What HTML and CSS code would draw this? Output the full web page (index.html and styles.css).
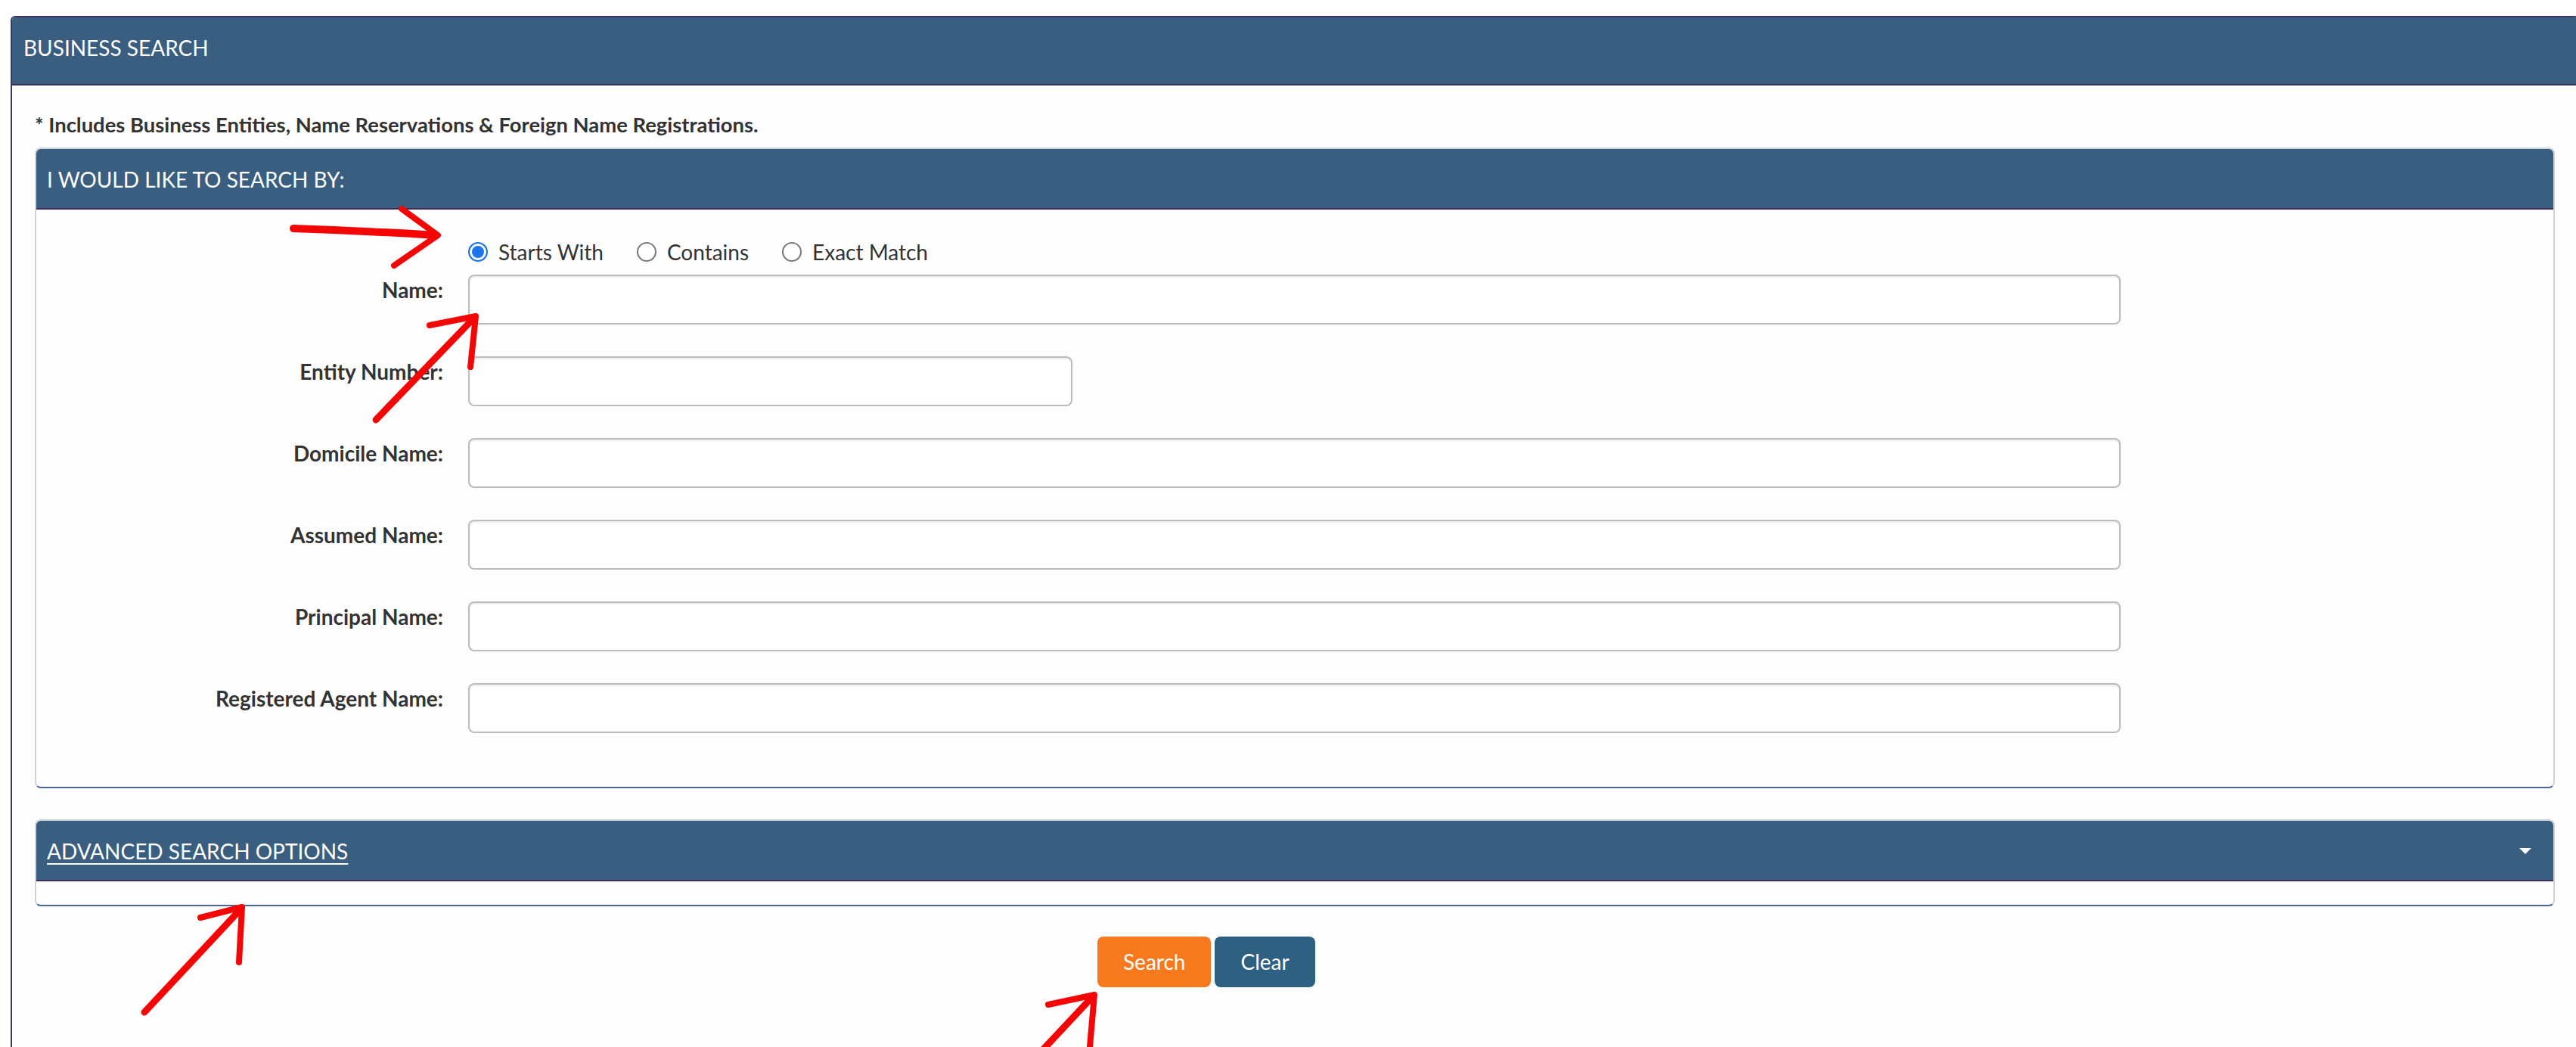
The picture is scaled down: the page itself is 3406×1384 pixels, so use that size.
FILE: index.html
```html
<!DOCTYPE html>
<html lang="en">
<head>
    <meta charset="UTF-8">
    <meta name="viewport" content="width=device-width, initial-scale=1.0">
    <title>Business Search</title>
    <link rel="stylesheet" href="styles.css">
</head>
<body>
<div class="page">
    <div class="panel panel-main">
        <div class="panel-heading">BUSINESS SEARCH</div>
        <div class="panel-body">
            <p class="note">* Includes Business Entities, Name Reservations &amp; Foreign Name Registrations.</p>

            <div class="panel panel-sub">
                <div class="panel-heading">I WOULD LIKE TO SEARCH BY:</div>
                <div class="panel-body search-by">
                    <div class="match-type">
                        <label class="radio"><input type="radio" name="match" checked> Starts With</label>
                        <label class="radio"><input type="radio" name="match"> Contains</label>
                        <label class="radio"><input type="radio" name="match"> Exact Match</label>
                    </div>
                    <div class="form-grid">
                        <label class="control-label" for="name">Name:</label>
                        <input class="form-control" id="name" type="text">

                        <label class="control-label" for="entity">Entity Number:</label>
                        <input class="form-control short" id="entity" type="text">

                        <label class="control-label" for="domicile">Domicile Name:</label>
                        <input class="form-control" id="domicile" type="text">

                        <label class="control-label" for="assumed">Assumed Name:</label>
                        <input class="form-control" id="assumed" type="text">

                        <label class="control-label" for="principal">Principal Name:</label>
                        <input class="form-control" id="principal" type="text">

                        <label class="control-label" for="agent">Registered Agent Name:</label>
                        <input class="form-control" id="agent" type="text">
                    </div>
                </div>
            </div>

            <div class="panel panel-sub panel-advanced">
                <div class="panel-heading">
                    <a href="#">ADVANCED SEARCH OPTIONS</a>
                    <span class="caret"></span>
                </div>
                <div class="panel-body"></div>
            </div>

            <div class="actions">
                <button class="btn btn-search" type="button">Search</button>
                <button class="btn btn-clear" type="button">Clear</button>
            </div>
        </div>
    </div>

    <!-- hand drawn pointers -->
    <svg class="marks" width="3406" height="1384" viewBox="0 0 3406 1384">
        <g fill="none" stroke="#f40606" stroke-linecap="round" stroke-linejoin="round">
            <path d="M388 302 Q480 305 576 311" stroke-width="10"/>
            <path d="M531 276 L579 311 L521 351" stroke-width="8"/>

            <path d="M497 555 L627 420" stroke-width="9"/>
            <path d="M568 430 L629 418 L622 485" stroke-width="8"/>

            <path d="M191 1338 L318 1202" stroke-width="9"/>
            <path d="M265 1213 L320 1199 L316 1272" stroke-width="8"/>

            <path d="M1372 1395 L1445 1317" stroke-width="9"/>
            <path d="M1386 1328 L1447 1315 L1440 1395" stroke-width="8"/>
        </g>
    </svg>
</div>
</body>
</html>
```

FILE: styles.css
```css
html, body {
    margin: 0;
    overflow: hidden;
    background: #fff;
}
body {
    font-family: Lato, "Open Sans", Arial, sans-serif;
    color: #333;
}
.page {
    position: relative;
    padding: 21px 0 0 14px;
}

/* panels */
.panel {
    background: #fdfdfd;
}
.panel-heading {
    background: #3a5e80;
    color: #fff;
    font-size: 28px;
    line-height: 40px;
    border-bottom: 2px solid #3c2c5e;
}
.panel-main {
    margin-right: -4px;
    border: 2px solid #3d3466;
    border-radius: 6px 6px 0 0;
    overflow: hidden;
}
.panel-main > .panel-heading {
    padding: 20px 15px 28px;
}
.panel-main > .panel-body {
    padding: 34px 30px 140px;
}
.note {
    margin: 0 0 12px;
    font-size: 27.4px;
    line-height: 36px;
    font-weight: 700;
}
.panel-sub {
    border: 2px solid #ccd4de;
    border-bottom-color: #4b6899;
    border-radius: 8px;
    overflow: hidden;
}
.panel-sub > .panel-heading {
    padding: 20px 14px 18px;
}

/* search by */
.search-by {
    padding: 38px 0 71px;
}
.match-type {
    display: flex;
    margin: 0 0 12px 571px;
    font-size: 28px;
    line-height: 36px;
}
.radio {
    display: flex;
    align-items: center;
    gap: 14px;
    margin-right: 44px;
}
.radio input {
    appearance: none;
    -webkit-appearance: none;
    margin: 0;
    width: 26px;
    height: 26px;
    border: 2px solid #7a7a7a;
    border-radius: 50%;
    background: #fff;
}
.radio input:checked {
    border-color: #1a74ec;
    background: #1a74ec;
    box-shadow: inset 0 0 0 3px #fff;
}
.form-grid {
    display: grid;
    grid-template-columns: 538px 2185px;
    column-gap: 33px;
    row-gap: 42px;
}
.control-label {
    padding-top: 2px;
    text-align: right;
    font-size: 28px;
    line-height: 36px;
    font-weight: 700;
}
.form-control {
    box-sizing: border-box;
    height: 66px;
    margin: 0;
    border: 2px solid #bcbcbc;
    border-radius: 8px;
    background: #fff;
    box-shadow: inset 0 2px 2px rgba(0, 0, 0, .08);
}
.form-control.short {
    width: 799px;
}

/* advanced */
.panel-advanced {
    margin-top: 41px;
}
.panel-advanced .panel-heading {
    display: flex;
    justify-content: space-between;
    align-items: center;
}
.panel-advanced .panel-heading a {
    color: #fff;
    text-decoration: underline;
    text-decoration-thickness: 2px;
    text-underline-offset: 5px;
}
.caret {
    width: 0;
    height: 0;
    margin-right: 15px;
    border-top: 8px solid #fff;
    border-left: 8px solid transparent;
    border-right: 8px solid transparent;
}
.panel-advanced > .panel-body {
    height: 31px;
}

/* buttons */
.actions {
    display: flex;
    gap: 5px;
    margin-top: 40px;
    padding-left: 1405px;
}
.btn {
    height: 67px;
    padding: 0 34px;
    border: none;
    border-radius: 8px;
    color: #fff;
    font: 28px/67px Lato, "Open Sans", Arial, sans-serif;
}
.btn-search {
    background: #f7791e;
}
.btn-clear {
    background: #2e6081;
}

.marks {
    position: absolute;
    left: 0;
    top: 0;
    pointer-events: none;
}
```
